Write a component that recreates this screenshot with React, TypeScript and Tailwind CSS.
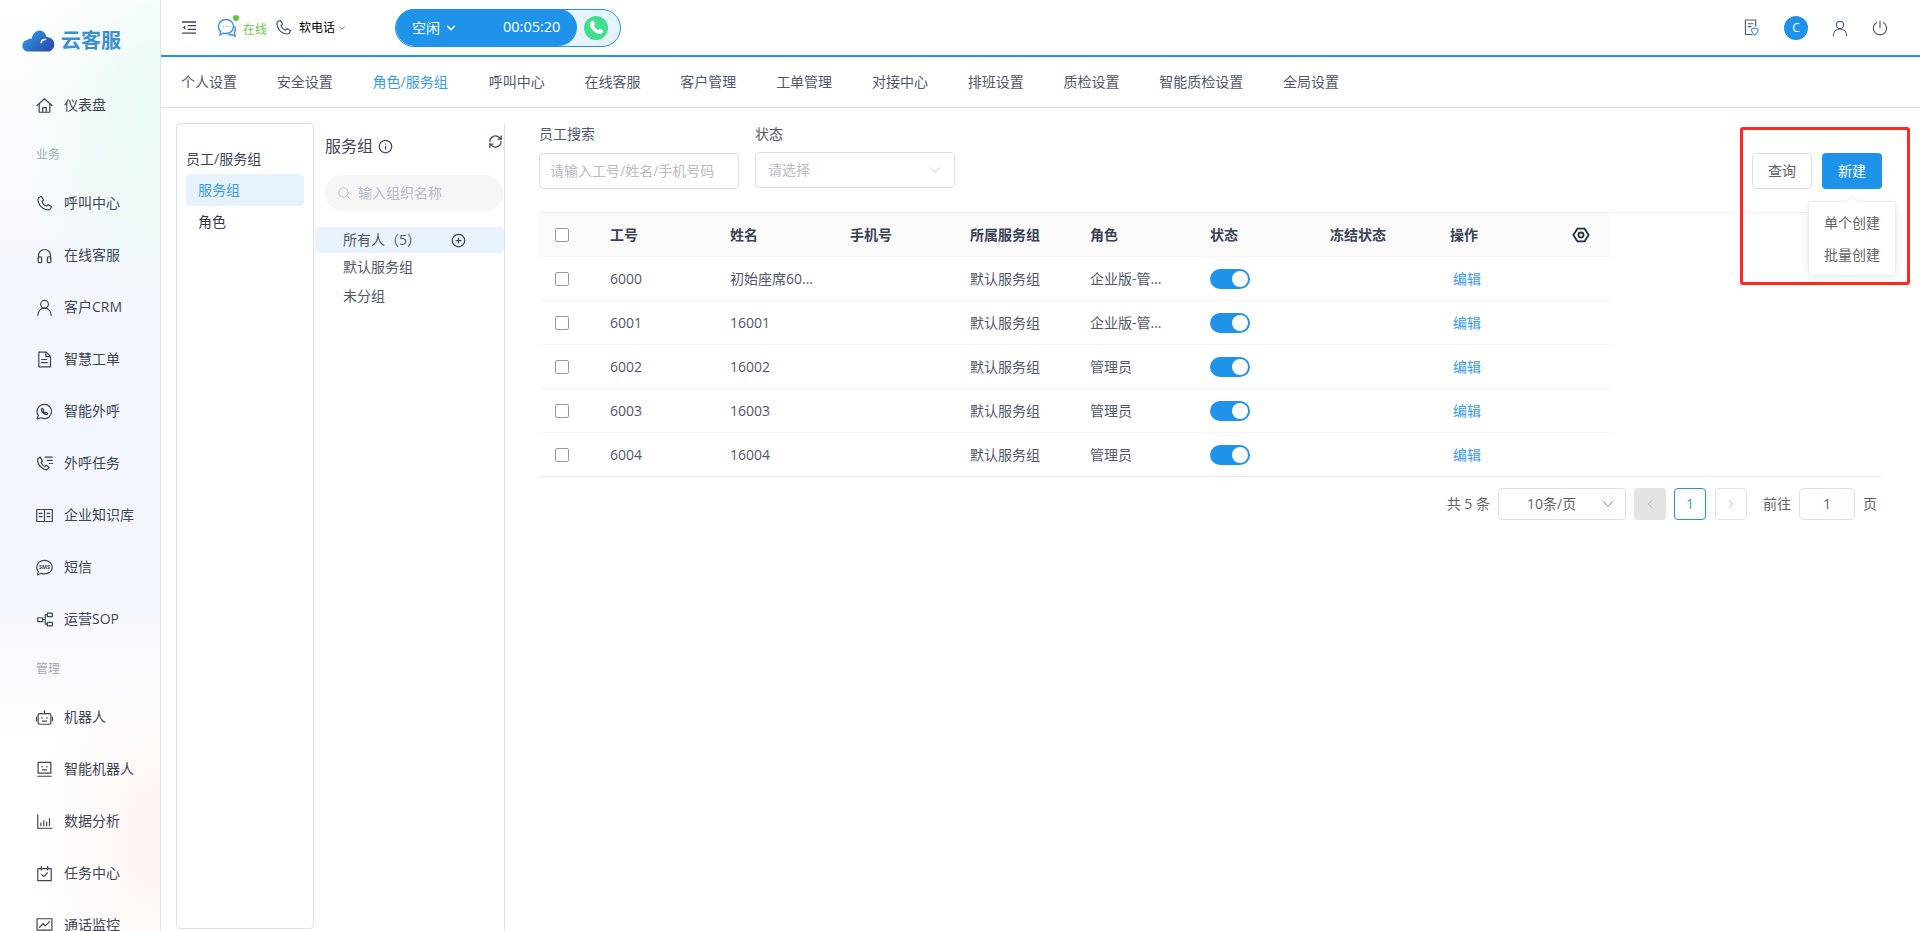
import { ChevronDown, ChevronLeft, ChevronRight, Search, Info, CirclePlus, RefreshCw } from "lucide-react";
import type { ReactNode } from "react";

const Ic = ({ children, className = "w-4 h-4" }: { children: ReactNode; className?: string }) => (
  <svg viewBox="0 0 24 24" fill="none" stroke="currentColor" strokeWidth="1.7" strokeLinecap="round" strokeLinejoin="round" className={className}>
    {children}
  </svg>
);

const phone = "M7.500 2 3.500 4C2.500 5.500 2.300 7.500 3.500 10.500c1.600 4.500 5.500 8.500 10 10 3 1 5 .8 6.500-.3l2-3.700-5-3-2.300 2.300c-2.300-.9-5.500-4-6.300-6.500l2.300-2.300L7.500 2Z";

const sideIcons: Record<string, ReactNode> = {
  home: <><path d="M1.500 12 12 2.500 22.500 12" /><path d="M4.500 10v11.500h15V10" /><path d="M9.500 21.500V15h5v6.500" /></>,
  phone: <path d={phone} />,
  headset: <><path d="M3.500 17v-5a8.500 8.500 0 0 1 17 0v5" /><rect x="3" y="14" width="5" height="8" rx="1.500" /><rect x="16" y="14" width="5" height="8" rx="1.500" /></>,
  user: <><circle cx="12" cy="7.500" r="5.500" /><path d="M2.500 23c.5-6 4.500-10 9.500-10s9 4 9.500 10" /></>,
  doc: <><path d="M4 1.500h10.500L20.500 7.500V22.500H4Z" /><path d="M14 2v6h6" /><path d="M8 12h7M8 16.500h8" /></>,
  callout: <><path d="M12 2a10 10 0 0 1 0 20 10.500 10.500 0 0 1-5-1.200L1.500 22.500l1.700-5A10 10 0 0 1 12 2Z" /><path d="M9 7.500 7.500 8.500c-.3 3.500 4 8 8 8l1-1.800-2.500-1.700-1.200 1c-1.200-.5-2.300-1.700-2.700-3l1-1.200L9 7.500Z" /></>,
  task: <><path d="M6 3 2.500 5c-1 3.500 1 9 4.500 12s7 4.500 9 3.500l2.500-3-4-3-2 1.800c-2.500-1.100-4.500-3.500-5.300-5.800L9 8.500 6 3Z" /><path d="M13 3h10M16 7.500h7M19 12h4" /></>,
  book: <><path d="M1 3.500h22v17H1Z" /><path d="M12 3.500v17" /><path d="M4.500 9h4M4.500 13.500h4M15.500 9h4M15.500 13.500h4" /></>,
  sms: <><path d="M12 2c6 0 11 4.200 11 9.500S18 21 12 21c-1.600 0-3.100-.3-4.500-.8L2 22.500l1.300-4.800C1.900 16.100 1 14 1 11.500 1 6.200 6 2 12 2Z" /><text x="12" y="14.500" textAnchor="middle" fontSize="7.500" fontWeight="700" fill="currentColor" stroke="none">SMS</text></>,
  sop: <><rect x="2.500" y="9.500" width="7" height="5.500" /><rect x="16" y="3" width="7" height="5" /><rect x="16" y="16" width="7" height="5" /><path d="M9.500 12H13M13 5.500h3M13 18.500h3M13 5.500v13" /></>,
  bot: <><rect x="3" y="6.500" width="18" height="15" rx="2" /><path d="M12 6.500V2.500M.8 11.500v5M23.200 11.500v5M8.500 12v1M15.500 12v1M9 17h6" /></>,
  face: <><rect x="3" y="2" width="18" height="15" /><path d="M8.500 7.500v1M15.500 7.500v1M9 12.500h6M2.500 21.500h19" /></>,
  chart: <path d="M2.500 2.500v19h20M7 18v-4M11 18v-7M15 18v-5M19 18V8" />,
  check: <><rect x="2.500" y="5" width="19" height="17" /><path d="M7.500 2v5M16.500 2v5M8 13.500l3 3 5-5.500" /></>,
  monitor: <><rect x="1.500" y="2.500" width="21" height="16" /><path d="m5 14.500 5-5 3 3 6-6M12 18.500V23" /></>,
};

const group1 = [
  ["phone", "呼叫中心"], ["headset", "在线客服"], ["user", "客户CRM"], ["doc", "智慧工单"], ["callout", "智能外呼"],
  ["task", "外呼任务"], ["book", "企业知识库"], ["sms", "短信"], ["sop", "运营SOP"],
];
const group2 = [["bot", "机器人"], ["face", "智能机器人"], ["chart", "数据分析"], ["check", "任务中心"], ["monitor", "通话监控"]];
const tabs = ["个人设置", "安全设置", "角色/服务组", "呼叫中心", "在线客服", "客户管理", "工单管理", "对接中心", "排班设置", "质检设置", "智能质检设置", "全局设置"];
const rows = [
  ["6000", "初始座席60...", "企业版-管..."],
  ["6001", "16001", "企业版-管..."],
  ["6002", "16002", "管理员"],
  ["6003", "16003", "管理员"],
  ["6004", "16004", "管理员"],
];

function NavItem({ icon, label }: { icon: string; label: string }) {
  return (
    <div className="flex h-[52px] items-center pl-[36px] text-sm text-[#3d4657]">
      <Ic className="mr-[11px] h-[17px] w-[17px] shrink-0">{sideIcons[icon]}</Ic>
      {label}
    </div>
  );
}

function Checkbox() {
  return <span className="block h-[14px] w-[14px] rounded-[2px] border border-[#9a9a9a] bg-white" />;
}

export default function App() {
  return (
    <div className="flex h-[931px] w-[1920px] overflow-hidden bg-white font-['Open_Sans','Noto_Sans_CJK_SC',sans-serif] text-sm text-[#50586b]">
      <aside className="h-full w-[161px] shrink-0 overflow-hidden border-r border-[#dfe3ec] bg-[radial-gradient(ellipse_90%_22%_at_100%_12%,#eafaf3_0%,transparent_100%),radial-gradient(ellipse_80%_20%_at_100%_90%,#fdf3f0_0%,transparent_100%),linear-gradient(#ffffff_0%,#f3f6fe_35%,#f3f6fe_62%,#ffffff_80%)]">
        <div className="flex h-[79px] items-start pl-[22px] pt-[28px]">
          <svg viewBox="0 0 33 22" className="mt-[2px] h-[22px] w-[33px]">
            <defs>
              <linearGradient id="cl" x1="0" y1="0" x2="1" y2="0.7">
                <stop offset="0" stopColor="#2fa6e6" />
                <stop offset="1" stopColor="#2b4db0" />
              </linearGradient>
            </defs>
            <path d="M6 21.500a5.800 5.800 0 0 1-1-11.500C6.500 9 8 8.500 9.500 9 10.500 4 14 .5 17.500.5c3.500 0 6 2.500 7 6.500a7.500 7.500 0 0 1 3 14.500H6Z" fill="url(#cl)" />
            <path d="M19 12.500c.6-2 2.500-3.300 4.500-3" stroke="#fff" strokeWidth="1.500" fill="none" strokeLinecap="round" />
          </svg>
          <span className="ml-[6px] text-[20px] font-bold leading-[26px] text-[#3f8fd6]">云客服</span>
        </div>
        <NavItem icon="home" label="仪表盘" />
        <div className="flex h-[46px] items-center pl-9 pt-[2px] text-xs text-[#a3a8b3]">业务</div>
        {group1.map(([i, l]) => <NavItem key={l} icon={i} label={l} />)}
        <div className="flex h-[46px] items-center pl-9 pt-[1px] text-xs text-[#a3a8b3]">管理</div>
        {group2.map(([i, l]) => <NavItem key={l} icon={i} label={l} />)}
      </aside>

      <div className="flex min-w-0 flex-1 flex-col">
        <header className="flex h-[57px] shrink-0 items-center border-b-2 border-[#1f93e9] pl-[21px] pr-[32px]">
          <svg viewBox="0 0 16 14" className="h-[13px] w-[15px] text-[#3a4256]" fill="none" stroke="currentColor" strokeWidth="1.500">
            <path d="M0 1h15M6 5h9M6 9h9M0 13h15" />
            <path d="M3.500 4.500 0.800 7l2.700 2.500Z" fill="currentColor" stroke="none" />
          </svg>
          <div className="relative ml-[20px] h-[20px] w-[20px]">
            <svg viewBox="0 0 20 20" className="h-[20px] w-[20px] text-[#3f8fe6]" fill="none" stroke="currentColor" strokeWidth="1.400">
              <path d="M9 1.500c4.500 0 7.500 3 7.500 7s-3 7-7.500 7c-1 0-1.800-.1-2.500-.4L3 17l.6-3.600C2.200 12.200 1.500 10.500 1.500 8.500c0-4 3-7 7.500-7Z" />
              <path d="M17.500 8c1 2 1 5 0 6.500l.5 3.500-3.500-1.500c-1 .4-2 .3-3 0" />
              <path d="M6 8.500h.8M8.800 8.500h.8M11.500 8.500h.8" strokeWidth="1.200" />
            </svg>
            <span className="absolute right-[-2px] top-[-3px] h-[6px] w-[6px] rounded-full bg-[#63c23f]" />
          </div>
          <span className="ml-[6px] mt-[4px] text-xs text-[#6cc24a]">在线</span>
          <Ic className="ml-[8px] h-[17px] w-[17px] text-[#50586b]"><path d={phone} /></Ic>
          <span className="ml-[7px] text-xs text-black">软电话</span>
          <ChevronDown className="ml-[2px] h-[10px] w-[10px] text-[#50586b]" />
          <div className="ml-[48px] flex h-[38px] w-[226px] items-center rounded-full border border-[#1f93e9] bg-[#e6f3fd]">
            <div className="flex h-[37px] w-[181px] items-center rounded-full bg-[#1f93e9] pl-[16px] text-white">
              <span>空闲</span>
              <ChevronDown className="ml-[4px] h-[14px] w-[14px]" strokeWidth={2.5} />
              <span className="ml-[45px] text-[14.500px]">00:05:20</span>
            </div>
            <div className="ml-[7px] flex h-[24px] w-[24px] items-center justify-center rounded-full bg-[#3fdf8e] text-white">
              <svg viewBox="0 0 24 24" className="h-[17px] w-[17px]" fill="currentColor"><path d={phone} /></svg>
            </div>
          </div>
          <div className="ml-auto flex items-center">
            <svg viewBox="0 0 16 18" className="h-[17px] w-[15px] text-[#50586b]" fill="none" stroke="currentColor" strokeWidth="1.200">
              <path d="M9 16.500H1.500V1H12.500V8" />
              <path d="M4 5h6M4 8h4" />
              <path d="M11.500 9.500l3.500 1.200c0 3-1 5-3.500 6.300-2.500-1.300-3.500-3.300-3.500-6.300Z" stroke="#3f8fe6" />
            </svg>
            <span className="ml-[25px] flex h-[24px] w-[24px] items-center justify-center rounded-full bg-[#1f93e9] text-xs text-white">C</span>
            <Ic className="ml-[24px] h-[16px] w-[16px] text-[#50586b]"><circle cx="12" cy="7.500" r="5.500" /><path d="M2 23c.5-6 5-9.500 10-9.500s9.500 3.500 10 9.500" /></Ic>
            <Ic className="ml-[24px] h-[16px] w-[16px] text-[#50586b]"><path d="M12 1.500v10" /><path d="M6.500 4a10 10 0 1 0 11 0" /></Ic>
          </div>
        </header>

        <nav className="flex h-[51px] shrink-0 items-center border-b border-[#e0e0e0] pl-[20px] text-[#50586b]">
          {tabs.map((t, i) => (
            <span key={t} className={i === 2 ? "mr-[41px] text-[#3b9ae8]" : "mr-[39.8px]"}>{t}</span>
          ))}
        </nav>

        <main className="flex min-h-0 flex-1 pl-[15px] pt-[15px]">
          <div className="h-[806px] w-[138px] shrink-0 rounded-[4px] border border-[#e0e0e0] px-[9px] pt-[25px]">
            <div className="leading-[20px] text-[#3d4657]">员工/服务组</div>
            <div className="mt-[5px] flex h-[32px] items-center rounded-[4px] bg-[#e6f3fd] pl-[12px] text-[#3b9ae8]">服务组</div>
            <div className="flex h-[32px] items-center pl-[12px] text-[#333a46]">角色</div>
          </div>

          <div className="h-full w-[191px] shrink-0 border-r border-[#e0e0e0]">
            <div className="relative pl-[11px] pt-[12px]">
              <div className="flex h-[22px] items-center text-base text-[#3d4657]">
                服务组
                <Info className="ml-[5px] h-[15px] w-[15px]" />
              </div>
              <RefreshCw className="absolute right-[1px] top-[11px] h-[15px] w-[15px] text-[#3a4256]" />
            </div>
            <div className="ml-[11px] mt-[18px] flex h-[36px] w-[178px] items-center rounded-full bg-[#f5f5f5] pl-[12px] text-[#b8bcc4]">
              <Search className="h-[14px] w-[14px]" strokeWidth={1.5} />
              <span className="ml-[7px]">输入组织名称</span>
            </div>
            <div className="ml-px mt-[16px] flex h-[26px] items-center rounded-[3px] bg-[#e9f2fd] pl-[28px]">
              所有人（5）
              <CirclePlus className="ml-[30px] h-[15px] w-[15px] text-[#3a4256]" />
            </div>
            <div className="flex h-[28px] items-center pl-[29px]">默认服务组</div>
            <div className="flex h-[29px] items-center pl-[29px]">未分组</div>
          </div>

          <div className="relative min-w-0 flex-1 pl-[34px] pr-[38px]">
            <div className="flex items-start justify-between">
              <div className="flex gap-[16px]">
                <div>
                  <div className="h-[20px] pt-[1px] leading-[20px]">员工搜索</div>
                  <div className="mt-[10px] flex h-[36px] w-[200px] items-center rounded-[4px] border border-[#dcdfe6] pl-[10px] text-[#b8bcc4]">请输入工号/姓名/手机号码</div>
                </div>
                <div>
                  <div className="h-[20px] pt-[1px] leading-[20px]">状态</div>
                  <div className="mt-[9px] flex h-[36px] w-[200px] items-center justify-between rounded-[4px] border border-[#dcdfe6] pl-[12px] pr-[10px] text-[#b8bcc4]">
                    请选择
                    <ChevronDown className="h-[18px] w-[18px]" strokeWidth={1.1} />
                  </div>
                </div>
              </div>
              <div className="mt-[30px] flex gap-[10px]">
                <button className="h-[36px] w-[60px] rounded-[4px] border border-[#dcdfe6] text-[#606266]">查询</button>
                <button className="h-[36px] w-[60px] rounded-[4px] bg-[#1f93e9] text-white">新建</button>
              </div>
            </div>

            <div className="mt-[23px] border-b border-t border-b-[#ebeef5] border-t-[#f0f0f0]">
              <div className="flex h-[44px] w-[1071px] items-center border-b border-[#f5f5f5] bg-[#fafafa] font-bold text-[#3a4256]">
                <div className="w-[61px] pl-[16px]"><Checkbox /></div>
                {["工号", "姓名", "手机号", "所属服务组", "角色", "状态", "冻结状态", "操作"].map((h) => (
                  <div key={h} className="w-[120px] pl-[10px]">{h}</div>
                ))}
                <svg viewBox="0 0 20 20" className="ml-[12px] h-[18px] w-[18px] text-[#2a3040]" fill="none" stroke="currentColor" strokeWidth="2">
                  <path d="M6 3h8l4.500 7-4.500 7H6L1.500 10Z" />
                  <circle cx="10" cy="10" r="2.800" />
                </svg>
              </div>
              {rows.map((r, i) => (
                <div key={r[0]} className={i === 4 ? "flex h-[43px] w-[1071px] items-center" : "flex h-[44px] w-[1071px] items-center border-b border-[#f5f5f5]"}>
                  <div className="w-[61px] pl-[16px]"><Checkbox /></div>
                  <div className="w-[120px] pl-[10px]">{r[0]}</div>
                  <div className="w-[120px] pl-[10px]">{r[1]}</div>
                  <div className="w-[120px] pl-[10px]" />
                  <div className="w-[120px] pl-[10px]">默认服务组</div>
                  <div className="w-[120px] pl-[10px]">{r[2]}</div>
                  <div className="w-[120px] pl-[10px]">
                    <span className="flex h-[20px] w-[40px] items-center justify-end rounded-full bg-[#1f93e9] pr-[2px]">
                      <span className="h-[16px] w-[16px] rounded-full bg-white" />
                    </span>
                  </div>
                  <div className="w-[120px] pl-[10px]" />
                  <div className="w-[120px] pl-[13px] text-[#3b9ae8]">编辑</div>
                </div>
              ))}
            </div>

            <div className="mt-[11px] flex h-[32px] items-center justify-end pr-[5px] text-[#606266]">
              <span>共 5 条</span>
              <div className="ml-[8px] flex h-[32px] w-[128px] items-center justify-between rounded-[4px] border border-[#dcdfe6] pl-[28px] pr-[8px]">
                10条/页
                <ChevronDown className="h-[18px] w-[18px]" strokeWidth={1.1} />
              </div>
              <div className="ml-[8px] flex h-[32px] w-[32px] items-center justify-center rounded-[4px] bg-[#e3e3e3] text-[#b0b0b0]"><ChevronLeft className="h-[14px] w-[14px]" strokeWidth={1.5} /></div>
              <div className="ml-[8px] flex h-[32px] w-[32px] items-center justify-center rounded-[4px] border border-[#1f93e9] text-[#3b9ae8]">1</div>
              <div className="ml-[9px] flex h-[32px] w-[32px] items-center justify-center rounded-[4px] border border-[#e0e3ea] text-[#b0b0b0]"><ChevronRight className="h-[14px] w-[14px]" strokeWidth={1.5} /></div>
              <span className="ml-[16px]">前往</span>
              <div className="ml-[8px] flex h-[32px] w-[56px] items-center justify-center rounded-[4px] border border-[#dcdfe6]">1</div>
              <span className="ml-[8px]">页</span>
            </div>

            <div className="absolute right-[24px] top-[78px] flex h-[75px] w-[88px] flex-col items-center justify-center gap-[12px] rounded-[4px] border border-[#ebeef5] bg-white text-[#606266] shadow-[0_2px_8px_rgba(0,0,0,0.08)]">
              <span className="absolute top-[-5px] h-[8px] w-[8px] rotate-45 border-l border-t border-[#ebeef5] bg-white" />
              <span>单个创建</span>
              <span>批量创建</span>
            </div>
            <div className="absolute right-[10px] top-[4px] h-[158px] w-[170px] rounded-[3px] border-[3px] border-[#ff2a1f]" />
          </div>
        </main>
      </div>
    </div>
  );
}
